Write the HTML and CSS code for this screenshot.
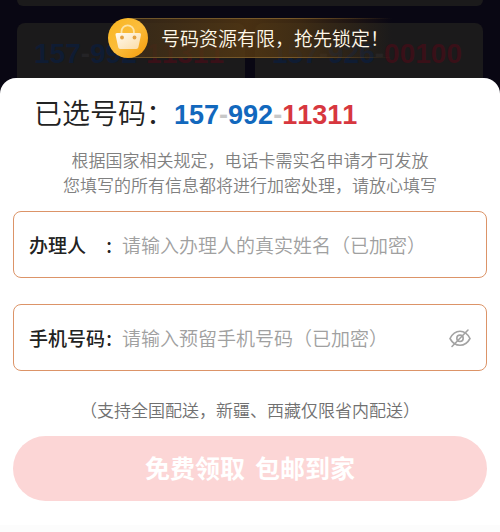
FILE: index.html
```html
<!DOCTYPE html>
<html lang="zh-CN">
<head>
    <meta charset="UTF-8">
    <meta name="viewport" content="width=device-width, initial-scale=1.0">
    <title>已选号码</title>
    <link rel="stylesheet" href="styles.css">
</head>
<body>
    <!-- 号码列表 -->
    <div class="list">
        <div class="list-head"></div>
        <div class="list-row">
            <div class="card"><span>157</span><i>-</i><span>992</span><i>-</i><b>11311</b></div>
            <div class="card"><span>157</span><i>-</i><span>926</span><i>-</i><b>00100</b></div>
        </div>
    </div>

    <!-- 顶部提示 -->
    <div class="toast">
        <svg class="toast-icon" viewBox="0 0 40 40" aria-hidden="true">
            <defs>
                <linearGradient id="coin" x1="0" y1="0" x2="1" y2="1">
                    <stop offset="0" stop-color="#f9b51e"/>
                    <stop offset="0.5" stop-color="#fbbd3c"/>
                    <stop offset="1" stop-color="#f59a08"/>
                </linearGradient>
                <linearGradient id="bag" x1="0" y1="0" x2="1" y2="1">
                    <stop offset="0" stop-color="#fffaf0"/>
                    <stop offset="1" stop-color="#fbdca6"/>
                </linearGradient>
            </defs>
            <circle cx="20" cy="20" r="20" fill="url(#coin)"/>
            <path d="M13.5 16v-2.500a6.200 6.200 0 0 1 12.400 0V16" fill="none" stroke="#fde3a4" stroke-width="1.800"/>
            <path d="M9 15h22.500q1.800 0 1.500 1.800l-2.600 12.400q-.4 1.800-2.200 1.800H12.300q-1.800 0-2.100-1.800L7.500 16.800Q7.200 15 9 15z" fill="url(#bag)"/>
            <circle cx="14" cy="19.500" r="1.900" fill="#e3a040"/>
            <circle cx="26.500" cy="19.500" r="1.900" fill="#e3a040"/>
        </svg>
        <span class="toast-text">号码资源有限，抢先锁定！</span>
    </div>

    <form class="sheet">
        <h1 class="title">已选号码：<span class="number"><span>157</span><i>-</i><span>992</span><i>-</i><b>11311</b></span></h1>
        <p class="tips">根据国家相关规定，电话卡需实名申请才可发放<br>您填写的所有信息都将进行加密处理，请放心填写</p>

        <div class="field">
            <label for="name"><span>办理人</span><span>:</span></label>
            <input type="text" id="name" placeholder="请输入办理人的真实姓名（已加密）">
        </div>

        <div class="field">
            <label for="phone"><span>手机号码</span><span>:</span></label>
            <input type="tel" id="phone" placeholder="请输入预留手机号码（已加密）">
            <button type="button" class="eye" aria-label="显示手机号码">
                <svg viewBox="0 0 24 20" fill="none" stroke="#a3a3a3" stroke-width="1.600" stroke-linecap="round">
                    <path d="M2 10.500C4.500 5.500 8 3.200 12 3.200s7.500 2.300 10 7.300c-2.500 4.700-6 6.800-10 6.800s-7.500-2.100-10-6.800z"/>
                    <circle cx="12" cy="10.300" r="3.200"/>
                    <path d="M20 2L4 18.500"/>
                </svg>
            </button>
        </div>

        <p class="note">（支持全国配送，新疆、西藏仅限省内配送）</p>
        <button type="submit" class="submit"><span>免费领取</span><span>包邮到家</span></button>
    </form>
</body>
</html>
```
FILE: styles.css
```css
* {
    box-sizing: border-box;
}
body {
    margin: 0;
    background-color: #fcfcfc;
    font-family: "Noto Sans CJK SC", sans-serif;
    color: #222;
}
i {
    font-style: normal;
}

/* 号码列表 */
.list {
    background-color: #090713;
    padding: 0 17px;
}
.list-head {
    height: 6px;
    background-color: #1b1a1b;
    border-radius: 0 0 6px 6px;
}
.list-row {
    display: grid;
    grid-template-columns: 1fr 1fr;
    gap: 10px;
    padding-top: 17px;
}
.card {
    height: 72px;
    padding: 15px 0 0 17px;
    background-color: #1b1a1b;
    border-radius: 8px 8px 0 0;
    font-family: "Liberation Sans", Arial, sans-serif;
    font-size: 28px;
    line-height: 32px;
    font-weight: bold;
    font-kerning: none;
    white-space: nowrap;
    color: #0f1c33;
}
.card i {
    color: #242326;
}
.card b {
    color: #391018;
}

/* 顶部提示 */
.toast {
    position: absolute;
    top: 18px;
    left: 50%;
    transform: translateX(-50%);
    display: flex;
    align-items: center;
    width: 284px;
    height: 40px;
    color: #fff8e8;
    white-space: nowrap;
}
.toast::before {
    content: "";
    position: absolute;
    inset: 0 0 0 20px;
    z-index: -1;
    background:
        linear-gradient(90deg, #6d5429, #7a5a2a 60%, transparent) top / 100% 1px no-repeat,
        linear-gradient(90deg, #6d5429, #7a5a2a 60%, transparent) bottom / 100% 1px no-repeat,
        linear-gradient(90deg, rgba(60, 44, 24, 0.8), rgba(88, 58, 18, 0.8) 45%, rgba(78, 52, 18, 0.7) 65%, transparent);
}
.toast-icon {
    flex: none;
    width: 40px;
    height: 40px;
}
.toast-text {
    margin-left: 13px;
    font-size: 19px;
    line-height: 28px;
    font-weight: 350;
}

/* 弹层 */
.sheet {
    position: relative;
    margin-top: -17px;
    padding: 12px 13px 24px;
    background-color: #fff;
    border-radius: 16px 16px 0 0;
}
.title {
    margin: 0;
    padding-left: 21px;
    font-size: 28px;
    line-height: 44px;
    font-weight: 350;
}
.number {
    font-family: "Liberation Sans", Arial, sans-serif;
    font-size: 27px;
    font-weight: bold;
    font-kerning: none;
    color: #1268bd;
}
.number i {
    color: #c8c8c8;
}
.number b {
    color: #d7373f;
}
.tips {
    margin: 10px 0 14px;
    font-size: 17px;
    line-height: 25px;
    font-weight: 350;
    text-align: center;
    white-space: nowrap;
    color: #808080;
}
.field {
    display: flex;
    align-items: center;
    height: 67px;
    margin-bottom: 26px;
    padding: 0 14px 0 15px;
    border: 1px solid #dc9468;
    border-radius: 8px;
}
.field label {
    display: flex;
    justify-content: space-between;
    flex: none;
    width: 83px;
    font-size: 19px;
    font-weight: 500;
}
.field input {
    flex: 1;
    min-width: 0;
    margin-left: 10px;
    padding: 0;
    border: none;
    outline: none;
    background: none;
    font: inherit;
    font-size: 19px;
    font-weight: 350;
    color: #222;
}
.field input::placeholder {
    color: #a0a0a0;
}
.eye {
    display: flex;
    padding: 0;
    border: none;
    background: none;
    cursor: pointer;
}
.eye svg {
    width: 24px;
    height: 20px;
}
.note {
    margin: 0 0 13px;
    font-size: 17px;
    line-height: 26px;
    font-weight: 350;
    text-align: center;
    white-space: nowrap;
    color: #707070;
}
.submit {
    display: flex;
    align-items: center;
    justify-content: center;
    gap: 10px;
    width: 100%;
    height: 65px;
    padding-bottom: 4px;
    border: none;
    border-radius: 33px;
    background-color: #fcd6d6;
    font: inherit;
    font-size: 25px;
    font-weight: bold;
    color: #fff;
    cursor: pointer;
}
```
